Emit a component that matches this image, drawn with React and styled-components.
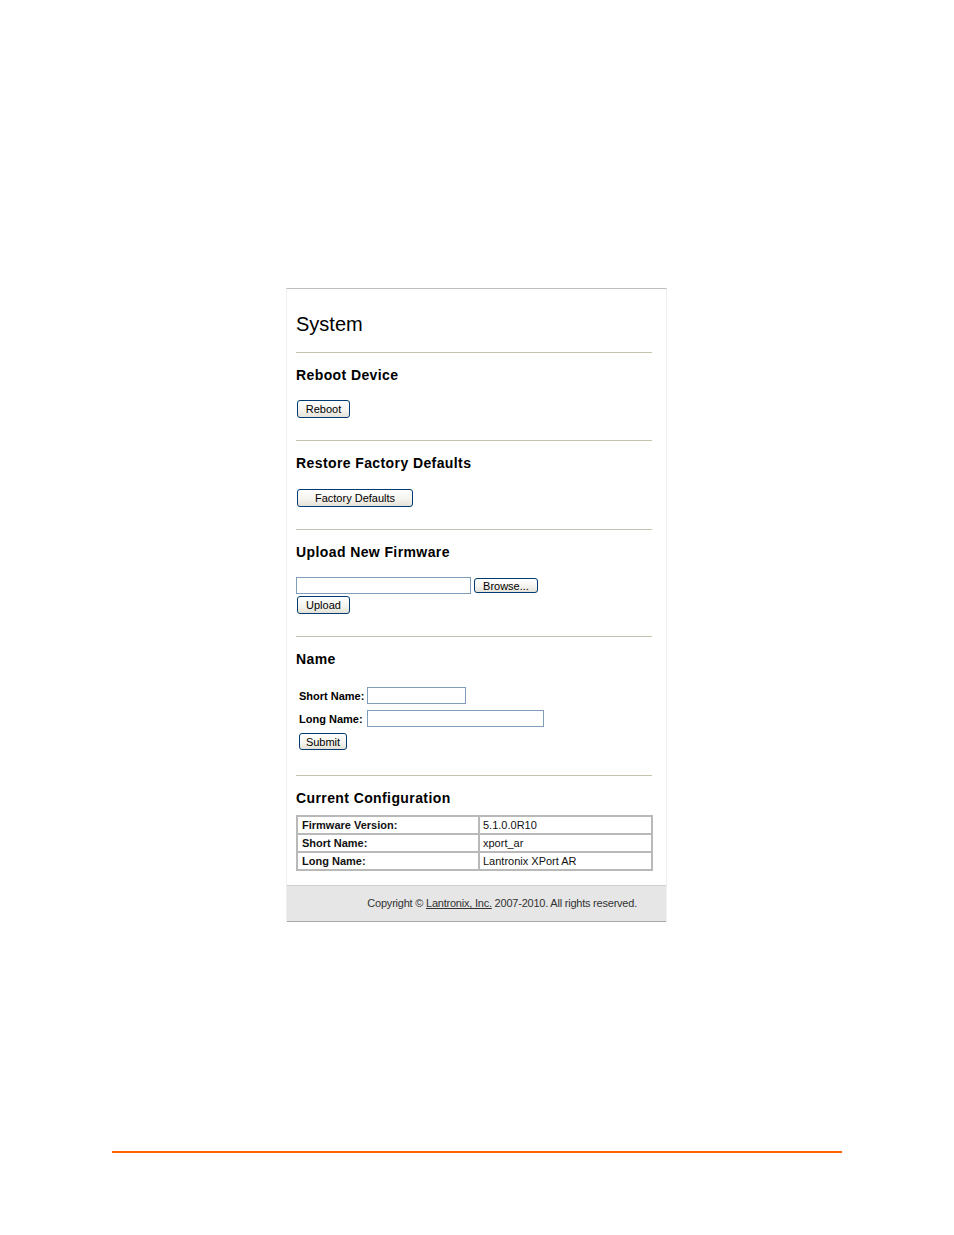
import React from "react"
import styled, { createGlobalStyle } from "styled-components"

const GlobalStyle = createGlobalStyle`
  html, body {
    margin: 0;
    padding: 0;
    background: #fff;
  }
  body {
    font-family: "Liberation Sans", Arial, sans-serif;
    color: #000;
  }
`

const Page = styled.div`
  width: 954px;
  min-height: 1235px;
  padding-top: 288px;
  box-sizing: border-box;
`

const Panel = styled.div`
  width: 381px;
  margin-left: 286px;
  box-sizing: border-box;
  border-top: 1px solid #bdbdbd;
  border-left: 1px solid #efefef;
  border-right: 1px solid #efefef;
  background: #fff;
`

const Content = styled.div`
  padding: 0 14px 0 9px;
`

const PageTitle = styled.h1`
  margin: 23px 0 0;
  font-size: 20px;
  line-height: 24px;
  font-weight: normal;
`

const Divider = styled.hr`
  margin: ${(p) => p.$top || 0}px 0 0;
  height: 1px;
  border: none;
  background: #c6c2b0;
`

const Section = styled.section`
  padding: 13px 0 ${(p) => p.$bottom}px;
`

const Heading = styled.h2`
  margin: 0 0 ${(p) => p.$gap}px;
  font-size: 14px;
  line-height: 18px;
  font-weight: bold;
  letter-spacing: 0.4px;
`

const Button = styled.button`
  display: block;
  width: ${(p) => p.$w}px;
  height: ${(p) => p.$h || 18}px;
  margin: ${(p) => p.$m || "0"};
  padding: 0;
  box-sizing: border-box;
  border: 1px solid #003c74;
  border-radius: 3px;
  background: linear-gradient(#ffffff, #f5f4ef 55%, #e4e2d8);
  font-family: "Liberation Sans", Arial, sans-serif;
  font-size: 11px;
  line-height: 14px;
  color: #000;
`

const FileRow = styled.div`
  display: flex;
  align-items: center;
  gap: 3px;
`

const TextInput = styled.input`
  display: block;
  width: ${(p) => p.$w}px;
  height: 17px;
  margin: 0;
  box-sizing: border-box;
  border: 1px solid #7f9db9;
  background: #fff;
  padding: 0 2px;
  font-family: "Liberation Sans", Arial, sans-serif;
  font-size: 11px;
`

const NameGrid = styled.div`
  display: grid;
  grid-template-columns: max-content max-content;
  column-gap: 3px;
  row-gap: 6px;
  align-items: center;
  padding-left: 3px;
`

const Label = styled.label`
  font-size: 11px;
  font-weight: bold;
`

const ConfigTable = styled.table`
  width: 357px;
  border: 1px solid #b9b9b9;
  border-spacing: 0;
  font-size: 11px;
`

const Cell = styled.td`
  border: 1px solid #b9b9b9;
  height: 16px;
  padding: 0 4px;
  line-height: 16px;
  font-weight: ${(p) => (p.$bold ? "bold" : "normal")};
  width: ${(p) => (p.$key ? "172px" : "auto")};
  padding-left: ${(p) => (p.$key ? 4 : 3)}px;
  color: #111;
`

const Footer = styled.footer`
  margin-top: 14px;
  height: 37px;
  box-sizing: border-box;
  border-top: 1px solid #cfcfcf;
  border-bottom: 1px solid #a6a6a6;
  background: #e6e6e6;
  padding-right: 29px;
  text-align: right;
  font-size: 11px;
  letter-spacing: -0.22px;
  line-height: 35px;
  color: #333;
`

const FooterLink = styled.a`
  color: #333;
  text-decoration: underline;
`

const BottomRule = styled.div`
  width: 730px;
  height: 2px;
  margin: 229px 0 0 112px;
  background: #ff6600;
`

const config = [
  ["Firmware Version:", "5.1.0.0R10"],
  ["Short Name:", "xport_ar"],
  ["Long Name:", "Lantronix XPort AR"],
]

export default function App() {
  return (
    <Page>
      <GlobalStyle />
      <Panel>
        <Content>
          <PageTitle>System</PageTitle>
          <Divider $top={16} />

          <Section $bottom={22}>
            <Heading $gap={16}>Reboot Device</Heading>
            <Button $w={53} $m="0 0 0 1px">Reboot</Button>
          </Section>
          <Divider />

          <Section $bottom={22}>
            <Heading $gap={17}>Restore Factory Defaults</Heading>
            <Button $w={116} $m="0 0 0 1px">Factory Defaults</Button>
          </Section>
          <Divider />

          <Section $bottom={22}>
            <Heading $gap={16}>Upload New Firmware</Heading>
            <FileRow>
              <TextInput $w={175} />
              <Button $w={64} $h={15}>Browse...</Button>
            </FileRow>
            <Button $w={53} $m="2px 0 0 1px">Upload</Button>
          </Section>
          <Divider />

          <Section $bottom={25}>
            <Heading $gap={19}>Name</Heading>
            <NameGrid>
              <Label>Short Name:</Label>
              <TextInput $w={99} />
              <Label>Long Name:</Label>
              <TextInput $w={177} />
              <Button $w={48} $h={17}>Submit</Button>
            </NameGrid>
          </Section>
          <Divider />

          <Section $bottom={0}>
            <Heading $gap={8}>Current Configuration</Heading>
            <ConfigTable>
              <tbody>
                {config.map(([k, v]) => (
                  <tr key={k}>
                    <Cell $bold $key>{k}</Cell>
                    <Cell>{v}</Cell>
                  </tr>
                ))}
              </tbody>
            </ConfigTable>
          </Section>
        </Content>
        <Footer>
          Copyright © <FooterLink href="#">Lantronix, Inc.</FooterLink> 2007-2010. All rights reserved.
        </Footer>
      </Panel>
      <BottomRule />
    </Page>
  )
}
